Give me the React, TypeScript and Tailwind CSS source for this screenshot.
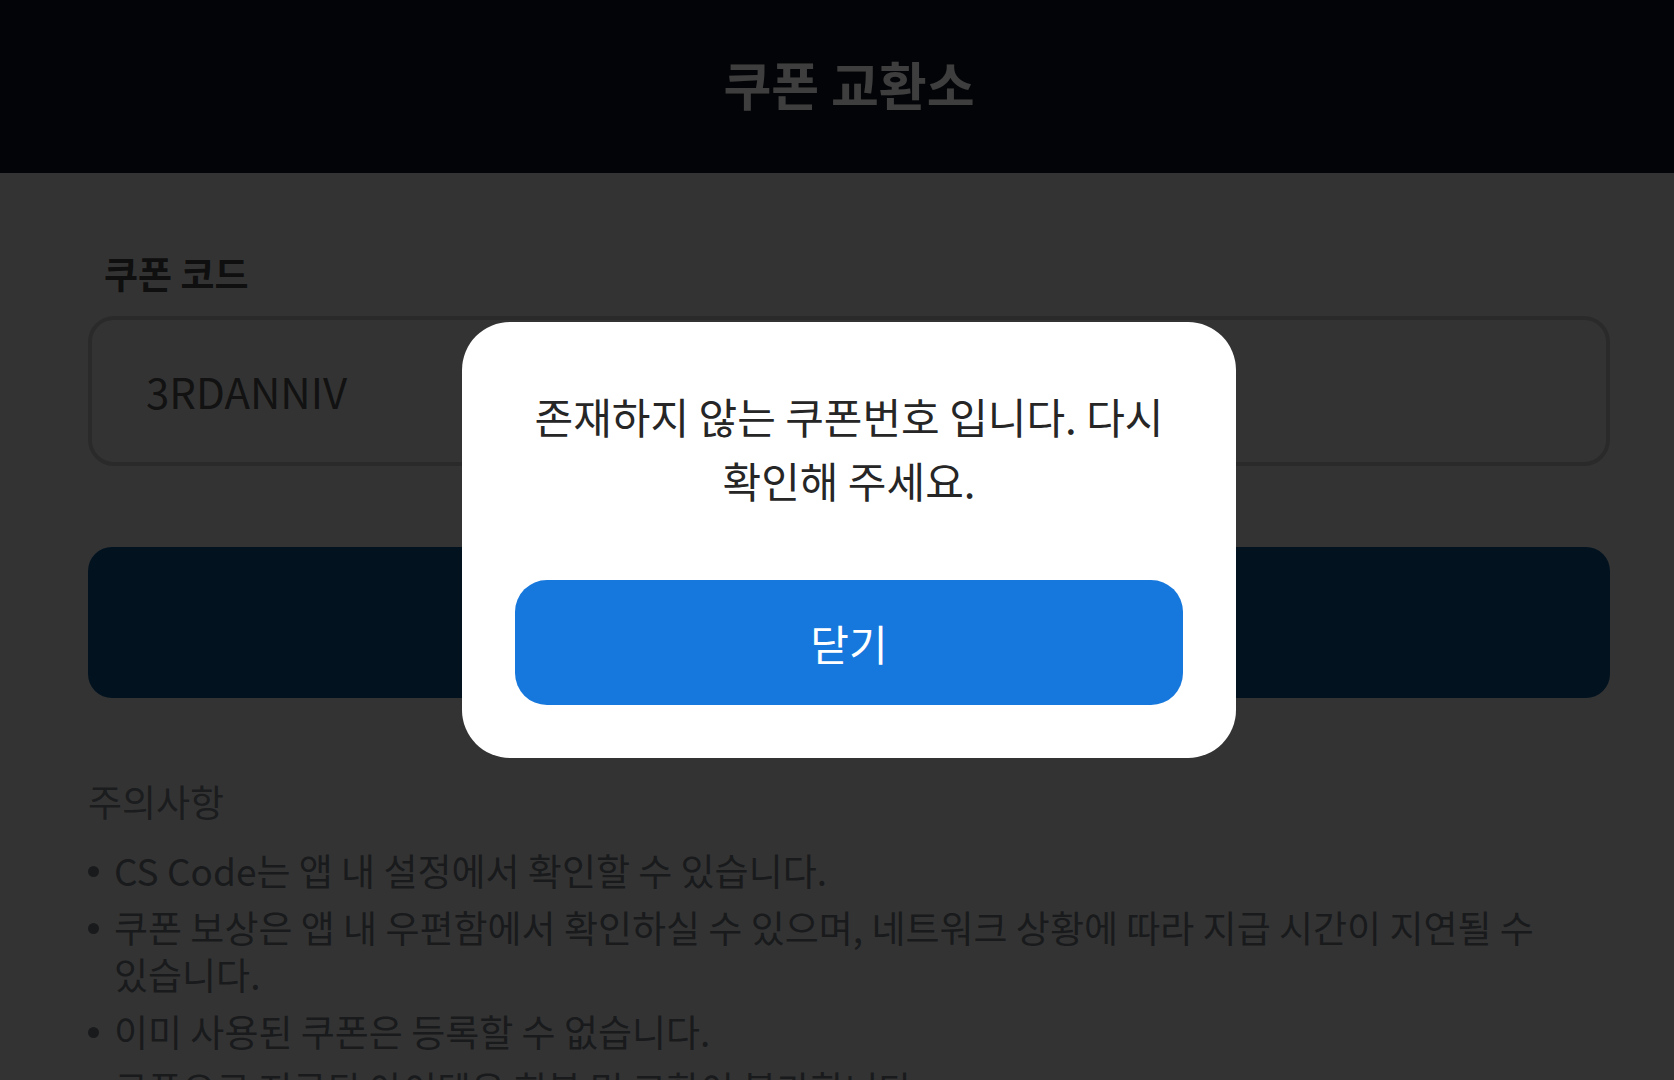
import React from "react";

const notes = [
  "CS Code는 앱 내 설정에서 확인할 수 있습니다.",
  "쿠폰 보상은 앱 내 우편함에서 확인하실 수 있으며, 네트워크 상황에 따라 지급 시간이 지연될 수 있습니다.",
  "이미 사용된 쿠폰은 등록할 수 없습니다.",
  "쿠폰으로 지급된 아이템은 회복 및 교환이 불가합니다.",
];

export default function App() {
  return (
    <div
      className="relative h-screen w-full overflow-hidden bg-[#cccccc]"
      style={{ fontFamily: '"Noto Sans CJK KR", "Noto Sans", sans-serif' }}
    >
      <header className="flex h-[173px] items-center justify-center bg-[#0c101c] pb-[6px] pl-[24px]">
        <h1 className="text-[52px] font-bold leading-none text-[#f5f5f5]">쿠폰 교환소</h1>
      </header>

      <main className="pl-[88px] pr-[64px]">
        <label className="mt-[79px] block pl-[16px] text-[37px] font-bold leading-[43px] text-[#3c3c3c]">
          쿠폰 코드
        </label>
        <div className="mt-[21px] flex h-[150px] items-center rounded-[26px] border-[4px] border-[#a8a8a8] pl-[54px]">
          <span className="text-[42px] leading-none text-[#4a4a4a]">3RDANNIV</span>
        </div>

        <button className="mt-[81px] block h-[151px] w-full rounded-[24px] bg-[#08487c]" />

        <h2 className="mt-[80px] text-[37px] font-normal leading-[47px] text-[#6c7078]">주의사항</h2>
        <ul className="mt-[22px] flex flex-col gap-[10px]">
          {notes.map((n) => (
            <li key={n} className="flex break-keep text-[37px] leading-[47px] text-[#666a72]">
              <span className="mr-[15px] mt-[19px] h-[11px] w-[11px] shrink-0 rounded-full bg-[#64686f]" />
              <span>{n}</span>
            </li>
          ))}
        </ul>
      </main>

      <div className="absolute inset-0 flex items-center justify-center bg-black/75 pl-[24px]">
        <div className="w-[774px] rounded-[48px] bg-white px-[53px] pb-[53px] pt-[62px]">
          <p className="break-keep text-center text-[42px] leading-[64px] text-[#262626]">
            존재하지 않는 쿠폰번호 입니다. 다시 확인해 주세요.
          </p>
          <button className="mt-[68px] flex h-[125px] w-full items-center justify-center rounded-[32px] bg-[#1677dd] text-[42px] text-white">
            닫기
          </button>
        </div>
      </div>
    </div>
  );
}
